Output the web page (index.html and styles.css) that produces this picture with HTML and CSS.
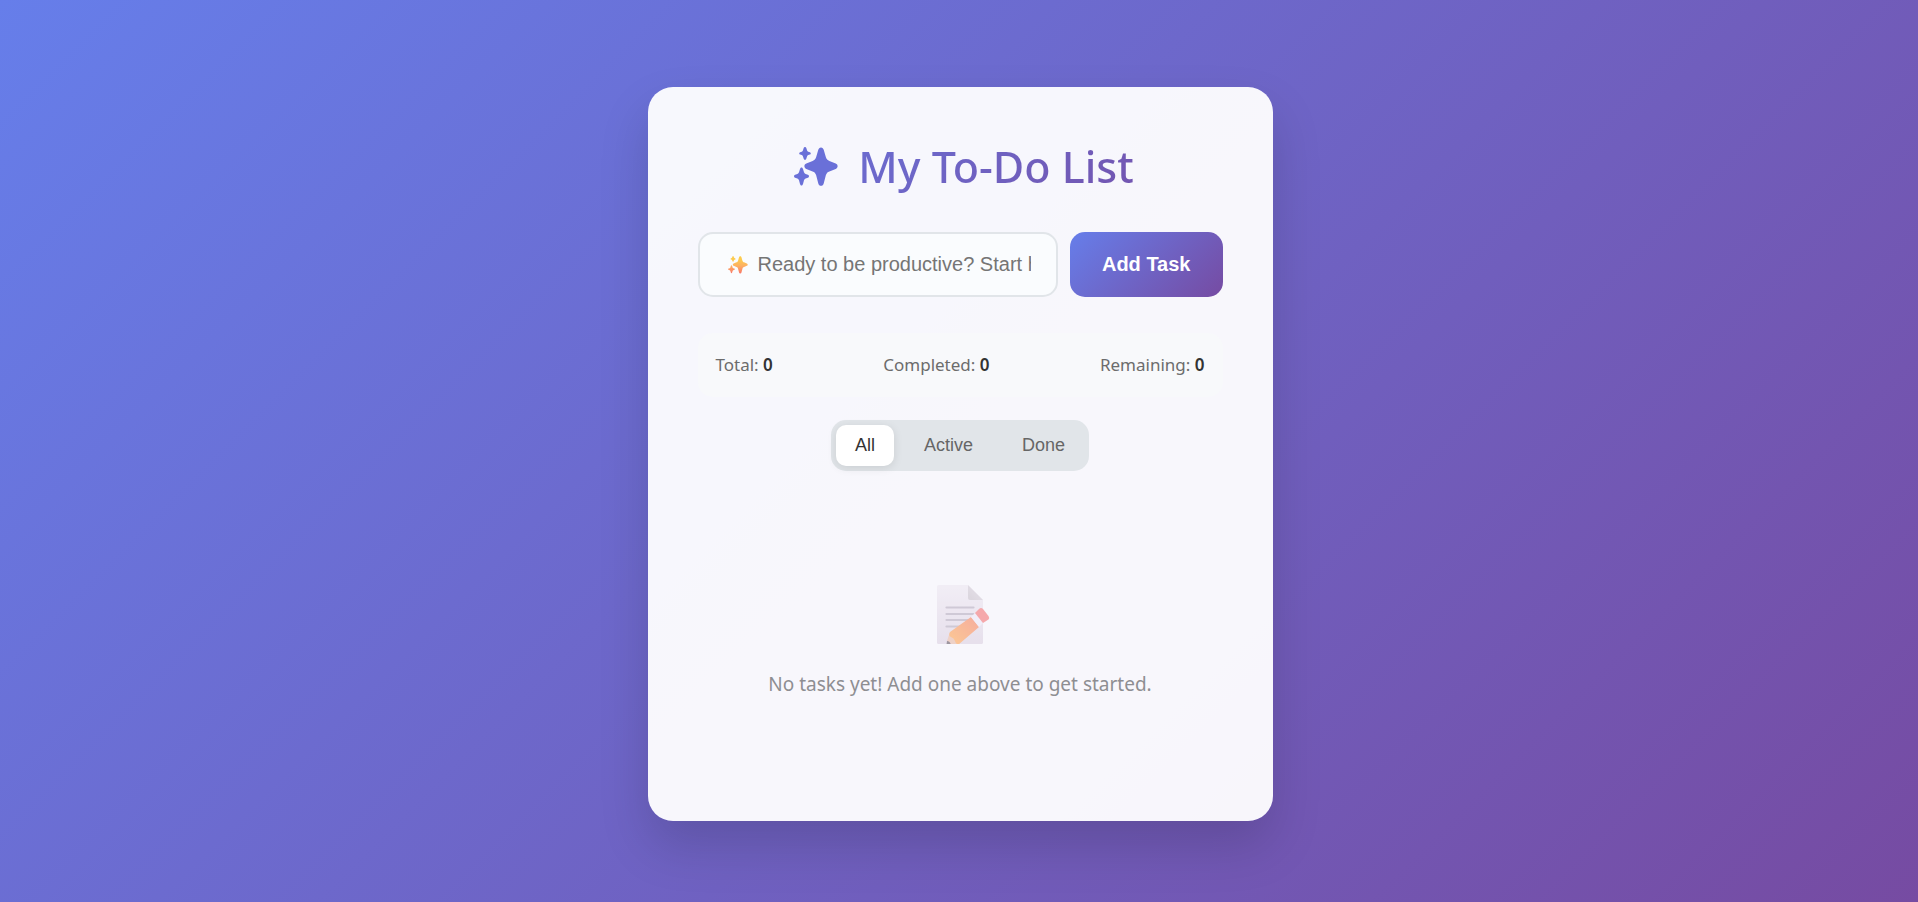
FILE: index.html
```html
<!DOCTYPE html>
<html lang="en">
<head>
<meta charset="utf-8">
<meta name="viewport" content="width=device-width, initial-scale=1">
<title>My To-Do List</title>
<link rel="stylesheet" href="styles.css">
</head>
<body>
<svg class="defs" aria-hidden="true" width="0" height="0">
  <defs>
    <linearGradient id="warm" x1="0" y1="0" x2="0" y2="40" gradientUnits="userSpaceOnUse">
      <stop offset="0.2" stop-color="#fccb4e"/><stop offset="0.55" stop-color="#fdb062"/><stop offset="1" stop-color="#f8736a"/>
    </linearGradient>
    <symbol id="sparkles" viewBox="0 0 44 40">
      <path d="M27 0.5c1.500 0 2.300 1 2.700 2.300l2.200 7.500c.6 2 1.600 3 3.500 3.600l6.300 2.700c1.200.5 1.900 1.500 1.900 2.700s-.7 2.200-1.900 2.600l-6.300 2.500c-1.900.7-2.900 1.700-3.500 3.700l-2.200 8.300c-.4 1.500-1.300 2.400-2.700 2.400s-2.300-1-2.700-2.400l-2.200-8.300c-.6-2-1.600-3-3.500-3.700l-6.300-2.500c-1.200-.4-1.900-1.400-1.900-2.600s.7-2.200 1.900-2.700l6.300-2.700c1.900-.6 2.900-1.600 3.500-3.600l2.200-7.500c.4-1.300 1.200-2.300 2.700-2.300z"/>
      <path d="M11 0c.7 0 1.100.4 1.300 1.100l.8 2.500c.2.600.6.900 1.100 1.100l1.700.6c.6.200.9.600.9 1.100s-.3.900-.9 1.100l-1.700.6c-.5.200-.9.500-1.100 1.100l-.8 2.600c-.2.700-.6 1.100-1.300 1.100s-1.100-.4-1.300-1.100l-.8-2.600c-.2-.6-.6-.9-1.100-1.100l-1.700-.6c-.6-.2-.9-.6-.9-1.100s.3-.9.900-1.100l1.700-.6c.5-.2.9-.5 1.100-1.100l.8-2.500c.2-.7.6-1.100 1.300-1.100z"/>
      <path d="M7.500 20.500c.8 0 1.200.6 1.500 1.500l1 3.300c.3.900.8 1.400 1.600 1.700l2.300.8c.7.300 1.100.8 1.100 1.500s-.4 1.200-1.100 1.500l-2.300.8c-.8.300-1.300.8-1.600 1.700l-1 3.600c-.3.900-.7 1.500-1.500 1.500s-1.200-.6-1.500-1.500l-1-3.600c-.3-.9-.8-1.400-1.600-1.700l-2.300-.8c-.7-.3-1.100-.8-1.100-1.500s.4-1.200 1.100-1.500l2.300-.8c.8-.3 1.300-.8 1.600-1.700l1-3.300c.3-.9.700-1.500 1.500-1.500z"/>
    </symbol>
  </defs>
</svg>

<main class="card">
  <h1 class="title">
    <svg class="title-icon" aria-hidden="true"><use href="#sparkles"/></svg>
    <span class="title-text">My To-Do List</span>
  </h1>

  <form class="task-form">
    <label class="field">
      <svg class="field-icon" aria-hidden="true"><use href="#sparkles"/></svg>
      <input class="field-input" type="text" aria-label="New task" placeholder="Ready to be productive? Start here...">
    </label>
    <button class="add-button" type="submit">Add Task</button>
  </form>

  <section class="stats" aria-label="Task statistics">
    <span>Total: <strong>0</strong></span>
    <span>Completed: <strong>0</strong></span>
    <span>Remaining: <strong>0</strong></span>
  </section>

  <nav class="filters" aria-label="Filter tasks">
    <button class="filter active" type="button">All</button>
    <button class="filter" type="button">Active</button>
    <button class="filter" type="button">Done</button>
  </nav>

  <section class="empty">
    <svg class="memo" viewBox="-8 0 62 60" aria-hidden="true">
      <defs>
        <linearGradient id="paper" x1="0" y1="0" x2="0" y2="1"><stop offset="0" stop-color="#eee8f2"/><stop offset="1" stop-color="#dcd1e2"/></linearGradient>
        <linearGradient id="fold" x1="0" y1="1" x2="1" y2="0"><stop offset="0" stop-color="#c7bfc9"/><stop offset="1" stop-color="#dcd4e0"/></linearGradient>
        <linearGradient id="pencil" x1="0" y1="1" x2="1" y2="0"><stop offset="0" stop-color="#ffab50"/><stop offset="1" stop-color="#f47c60"/></linearGradient>
        <clipPath id="edge"><rect width="54" height="59"/></clipPath>
      </defs>
      <path fill="url(#paper)" d="M1.500 0H31l15 15v42.500q0 1.500-1.500 1.500h-43Q0 59 0 57.500v-56Q0 0 1.500 0z"/>
      <path fill="url(#fold)" d="M31 0l15 15H33q-2 0-2-2z"/>
      <path stroke="#b5abbd" stroke-width="2.200" stroke-linecap="round" d="M9.500 22.500h27M9.500 29h27M9.500 35h23M9.500 41.500h16"/>
      <g clip-path="url(#edge)">
        <path fill="#e8b8a5" d="M13 47l8 11-10 4-1-6z"/>
        <path fill="#625663" d="M10 56q3 0 4 4l-5 3z"/>
        <path fill="url(#pencil)" d="M13 47L34 32l8 10-21 18q-2-1-3-4t-4-4-1-5z"/>
        <path fill="#eee9f8" d="M34 32l4-4 8 10-4 4z"/>
        <path fill="#f47577" d="M38 28l4-4q2-2 4 0l5.500 7q1.500 2 0 3.500L46 38z"/>
      </g>
    </svg>
    <p class="empty-text">No tasks yet! Add one above to get started.</p>
  </section>
</main>
</body>
</html>
```
FILE: styles.css
```css
* { box-sizing: border-box; }

body {
  margin: 0;
  min-height: 100vh;
  padding: 26px 20px 20px 22px;
  display: flex;
  align-items: center;
  justify-content: center;
  background: linear-gradient(135deg, #667eea 0%, #764ba2 100%);
  font-family: "Segoe UI", "Noto Sans", sans-serif;
  color: #333;
}

.defs { position: absolute; }

.card {
  width: 100%;
  max-width: 625px;
  padding: 50px;
  border-radius: 25px;
  background: rgba(255, 255, 255, 0.95);
  box-shadow: 0 25px 50px rgba(0, 0, 0, 0.15);
}

.title {
  margin: 0 0 35px;
  padding-left: 8px;
  display: flex;
  align-items: center;
  justify-content: center;
  gap: 20px;
  font-size: 43px;
  font-weight: 500;
  line-height: 60px;
}

.title-icon {
  width: 44px;
  height: 40px;
  fill: #6a70d8;
}

.title-text {
  background: linear-gradient(135deg, #6b6cd0, #7355b0);
  background-clip: text;
  -webkit-background-clip: text;
  color: transparent;
}

.task-form {
  display: flex;
  gap: 12px;
  margin-bottom: 36px;
}

.field {
  flex: 1;
  min-width: 0;
  height: 65px;
  padding: 0 25px 0 28px;
  display: flex;
  align-items: center;
  gap: 10px;
  border: 2px solid #e1e5e9;
  border-radius: 15px;
  background: #fafcfe;
}

.field-icon {
  flex: none;
  width: 20px;
  height: 18px;
  fill: url(#warm);
}

.field-input {
  flex: 1;
  min-width: 0;
  padding: 0;
  border: 0;
  outline: 0;
  background: transparent;
  font: 20px "Liberation Sans", Arial, sans-serif;
  color: #333;
}

.field-input::placeholder { color: #757575; }

.add-button {
  padding: 0 32px;
  border: 0;
  border-radius: 15px;
  background: linear-gradient(135deg, #667eea 0%, #764ba2 100%);
  color: #fff;
  font: bold 20px "Liberation Sans", Arial, sans-serif;
}

.stats {
  display: flex;
  justify-content: space-between;
  margin-bottom: 23px;
  padding: 20px 18px;
  border-radius: 15px;
  background: #f8f9fb;
  color: #6c6c6c;
  font-size: 17px;
  line-height: 24px;
}

.stats strong {
  color: #333;
  font-weight: 600;
}

.filters {
  width: fit-content;
  margin: 0 auto;
  padding: 5px;
  display: flex;
  gap: 11px;
  border-radius: 15px;
  background: #e1e5e9;
}

.filter {
  height: 41px;
  padding: 0 19px;
  border: 0;
  border-radius: 10px;
  background: transparent;
  color: #666;
  font: 18px "Liberation Sans", Arial, sans-serif;
}

.filter.active {
  background: #fff;
  color: #333;
  box-shadow: 0 2px 10px rgba(0, 0, 0, 0.1);
}

.empty {
  padding: 114px 0 73px;
  display: flex;
  flex-direction: column;
  align-items: center;
  gap: 25px;
}

.memo {
  width: 62px;
  height: 60px;
  fill: none;
  opacity: 0.6;
}

.empty-text {
  margin: 0;
  color: #8e8e92;
  font-size: 19px;
  line-height: 28px;
  text-align: center;
}
```
